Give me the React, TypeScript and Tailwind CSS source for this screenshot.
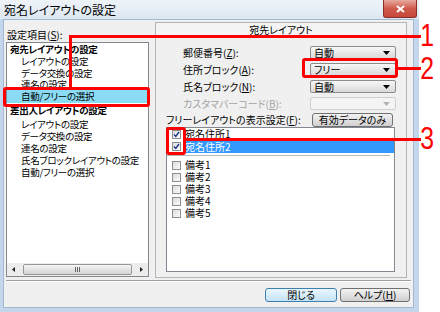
import React from "react";

// Vista-style combo box
function Combo({ value, disabled }: { value?: string; disabled?: boolean }) {
  return (
    <div
      className={`flex h-[13px] w-[86px] items-center justify-between rounded-[2px] border pl-[3px] pr-[5px] ${
        disabled
          ? "border-[#cfcfcf] bg-[#f4f4f4]"
          : "border-[#8c8c8c] bg-linear-to-b from-[#f7f7f7] to-[#d9d9d9]"
      }`}
    >
      <span>{value}</span>
      <svg width="7" height="4" viewBox="0 0 7 4">
        <path d="M0 0h7L3.5 4z" fill={disabled ? "#b4b4b4" : "#000"} />
      </svg>
    </div>
  );
}

function Check({ checked }: { checked?: boolean }) {
  return (
    <div className="flex h-[9px] w-[9px] shrink-0 items-center justify-center border border-[#8f8f8f] bg-linear-to-br from-[#dcdcdc] to-[#fbfbfb]">
      {checked && (
        <svg width="7" height="7" viewBox="0 0 7 7">
          <path d="M1 3.5l1.8 2L6 1" stroke="#21368c" strokeWidth="1.4" fill="none" />
        </svg>
      )}
    </div>
  );
}

function Mn({ k }: { k: string }) {
  return (
    <>
      (<span className="underline">{k}</span>):
    </>
  );
}

const leftTree: { text: string; level: 0 | 1; sel?: boolean; h: string }[] = [
  { text: "宛先レイアウトの設定", level: 0, h: "h-[12px] leading-[12px]" },
  { text: "レイアウトの設定", level: 1, h: "h-[12px] leading-[12px]" },
  { text: "データ交換の設定", level: 1, h: "h-[12px] leading-[12px]" },
  { text: "連名の設定", level: 1, h: "h-[11px] leading-[11px]" },
  { text: "自動/フリーの選択", level: 1, sel: true, h: "h-[13px] leading-[13px]" },
  { text: "差出人レイアウトの設定", level: 0, h: "h-[15px] leading-[15px]" },
  { text: "レイアウトの設定", level: 1, h: "h-[12px] leading-[12px]" },
  { text: "データ交換の設定", level: 1, h: "h-[12px] leading-[12px]" },
  { text: "連名の設定", level: 1, h: "h-[12px] leading-[12px]" },
  { text: "氏名ブロックレイアウトの設定", level: 1, h: "h-[12px] leading-[12px]" },
  { text: "自動/フリーの選択", level: 1, h: "h-[12px] leading-[12px]" },
];

function Btn({ children, primary, w }: { children: React.ReactNode; primary?: boolean; w: string }) {
  return (
    <div
      className={`flex h-[14px] ${w} items-center justify-center whitespace-nowrap rounded-[3px] border ${
        primary
          ? "border-[#3c7fb1] bg-linear-to-b from-[#eaf6fd] to-[#c4e3f6]"
          : "border-[#707070] bg-linear-to-b from-[#f2f2f2] to-[#d0d0d0]"
      }`}
    >
      {children}
    </div>
  );
}

export default function App() {
  return (
    <div className="relative flex h-[312px] w-[440px] overflow-hidden whitespace-nowrap bg-white font-['Noto_Sans_CJK_JP',sans-serif] text-[10px] leading-none text-black [font-feature-settings:'palt']">
      {/* window frame */}
      <div className="flex h-full w-[419px] flex-col bg-[#c3d6eb]">
        <div className="flex h-[19px] items-start justify-between bg-linear-to-b from-[#eef3f8] to-[#dde7f2]">
          <span className="pl-[4px] pt-[4px] text-[12px]">宛名レイアウトの設定</span>
          <div className="mr-[2px] flex h-[18px] w-[34px] items-center justify-center rounded-b-[3px] border border-t-0 border-[#8a2f25] bg-linear-to-b from-[#e6a89f] via-[#cf5a4b] to-[#c8473a]">
            <svg width="9" height="8" viewBox="0 0 9 8">
              <path d="M1 1l7 6M8 1L1 7" stroke="#fff" strokeWidth="2" />
            </svg>
          </div>
        </div>

        <div className="mb-[4px] ml-[3px] mr-[5px] flex flex-1 flex-col border border-[#a4b8cf] bg-[#f0f0f0] px-[2px] pt-[2px]">
          <div className="flex h-[256px] gap-[6px]">
            {/* left column */}
            <div className="flex w-[143px] flex-col">
              <div className="mt-[7px] h-[12px] pl-[1px] leading-[12px]">
                設定項目<Mn k="S" />
              </div>
              <div className="mt-[1px] flex h-[235px] flex-col border border-[#828790] bg-white">
                <div className="flex-1 text-[9.5px] tracking-[-0.3px]">
                  {leftTree.map((r, i) => (
                    <div
                      key={i}
                      className={`${r.h} ${r.level === 0 ? "pl-[3px] font-bold" : "pl-[14px]"} ${
                        r.sel ? "bg-[#8adcf4]" : ""
                      }`}
                    >
                      {r.text}
                    </div>
                  ))}
                </div>
                <div className="flex h-[13px] items-center bg-[#ececec]">
                  <div className="flex w-[13px] items-center justify-center">
                    <svg width="3" height="5" viewBox="0 0 3 5">
                      <path d="M3 0v5L0 2.5z" fill="#222" />
                    </svg>
                  </div>
                  <div className="ml-[3px] flex h-[11px] w-[109px] items-center justify-center rounded-[2px] border border-[#979797] bg-linear-to-b from-[#f5f5f5] to-[#d3d3d3]">
                    <svg width="5" height="5" viewBox="0 0 5 5">
                      <path d="M0.5 0v5M2.5 0v5M4.5 0v5" stroke="#666" strokeWidth="1" />
                    </svg>
                  </div>
                  <div className="ml-auto flex w-[13px] items-center justify-center">
                    <svg width="3" height="5" viewBox="0 0 3 5">
                      <path d="M0 0v5L3 2.5z" fill="#222" />
                    </svg>
                  </div>
                </div>
              </div>
            </div>

            {/* right panel */}
            <div className="flex w-[252px] flex-col border border-[#b4b4b4]">
              <div className="flex h-[14px] items-center justify-center border-b border-[#b4b4b4] bg-[#f4f4f4]">
                宛先レイアウト
              </div>
              <div className="mt-[9px] flex flex-col gap-[4px]">
                <div className="flex h-[13px] items-center">
                  <span className="w-[154px] pl-[27px]">
                    郵便番号<Mn k="Z" />
                  </span>
                  <Combo value="自動" />
                </div>
                <div className="flex h-[13px] items-center">
                  <span className="w-[154px] pl-[27px]">
                    住所ブロック<Mn k="A" />
                  </span>
                  <Combo value="フリー" />
                </div>
                <div className="flex h-[13px] items-center">
                  <span className="w-[154px] pl-[27px]">
                    氏名ブロック<Mn k="N" />
                  </span>
                  <Combo value="自動" />
                </div>
                <div className="flex h-[13px] items-center text-[#a3a3a3]">
                  <span className="w-[154px] pl-[27px]">
                    カスタマバーコード<Mn k="B" />
                  </span>
                  <Combo disabled />
                </div>
                <div className="-mt-[1px] flex h-[13px] items-center">
                  <span className="w-[156px] pl-[10px]">
                    フリーレイアウトの表示設定<Mn k="F" />
                  </span>
                  <Btn w="w-[81px]">有効データのみ</Btn>
                </div>
              </div>
              <div className="ml-[10px] mt-[1px] flex h-[145px] w-[229px] flex-col border border-[#828790] bg-white">
                <div className="flex h-[12px] items-center">
                  <div className="ml-[5px]">
                    <Check checked />
                  </div>
                  <span className="ml-[4px]">宛名住所1</span>
                </div>
                <div className="flex h-[13px] items-center">
                  <div className="ml-[5px]">
                    <Check checked />
                  </div>
                  <span className="ml-[4px] flex h-full flex-1 items-center bg-[#3399ff] text-white">宛名住所2</span>
                </div>
                <div className="mr-[4px] mt-[2px] h-px bg-[#b8b8b8]" />
                <div className="mt-[3px] flex flex-col">
                  {["備考1", "備考2", "備考3", "備考4", "備考5"].map((t) => (
                    <div key={t} className="flex h-[12px] items-center">
                      <div className="ml-[5px]">
                        <Check />
                      </div>
                      <span className="ml-[4px]">{t}</span>
                    </div>
                  ))}
                </div>
              </div>
            </div>
          </div>

          <div className="mt-[2px] h-[2px] border-b border-t border-b-white border-t-[#a0a0a0]" />
          <div className="mt-[6px] flex justify-end gap-[3px] pr-[1px]">
            <Btn primary w="w-[72px]">閉じる</Btn>
            <Btn w="w-[70px]">
              ヘルプ(<span className="underline">H</span>)
            </Btn>
          </div>
        </div>
      </div>

      {/* red callouts */}
      <div className="absolute left-[3px] top-[87px] h-[20px] w-[147px] rounded-[3px] border-[3px] border-[#ff0000]" />
      <div className="absolute left-[69px] top-[35px] h-[53px] w-[3px] bg-[#ff0000]" />
      <div className="absolute left-[69px] top-[35px] h-[3px] w-[352px] bg-[#ff0000]" />
      <div className="absolute left-[302px] top-[58px] h-[20px] w-[96px] rounded-[3px] border-[3px] border-[#ff0000]" />
      <div className="absolute left-[397px] top-[67px] h-[3px] w-[24px] bg-[#ff0000]" />
      <div className="absolute left-[166px] top-[127px] h-[28px] w-[20px] rounded-[3px] border-[3px] border-[#ff0000]" />
      <div className="absolute left-[185px] top-[138px] h-[3px] w-[236px] bg-[#ff0000]" />
      {["1", "2", "3"].map((n, i) => (
        <div
          key={n}
          className={`absolute left-[420px] w-[18px] origin-left scale-x-80 text-center font-['Liberation_Sans',sans-serif] text-[31px] leading-[30px] text-[#ff0000] ${
            ["top-[21px]", "top-[54px]", "top-[124px]"][i]
          }`}
        >
          {n}
        </div>
      ))}
    </div>
  );
}
